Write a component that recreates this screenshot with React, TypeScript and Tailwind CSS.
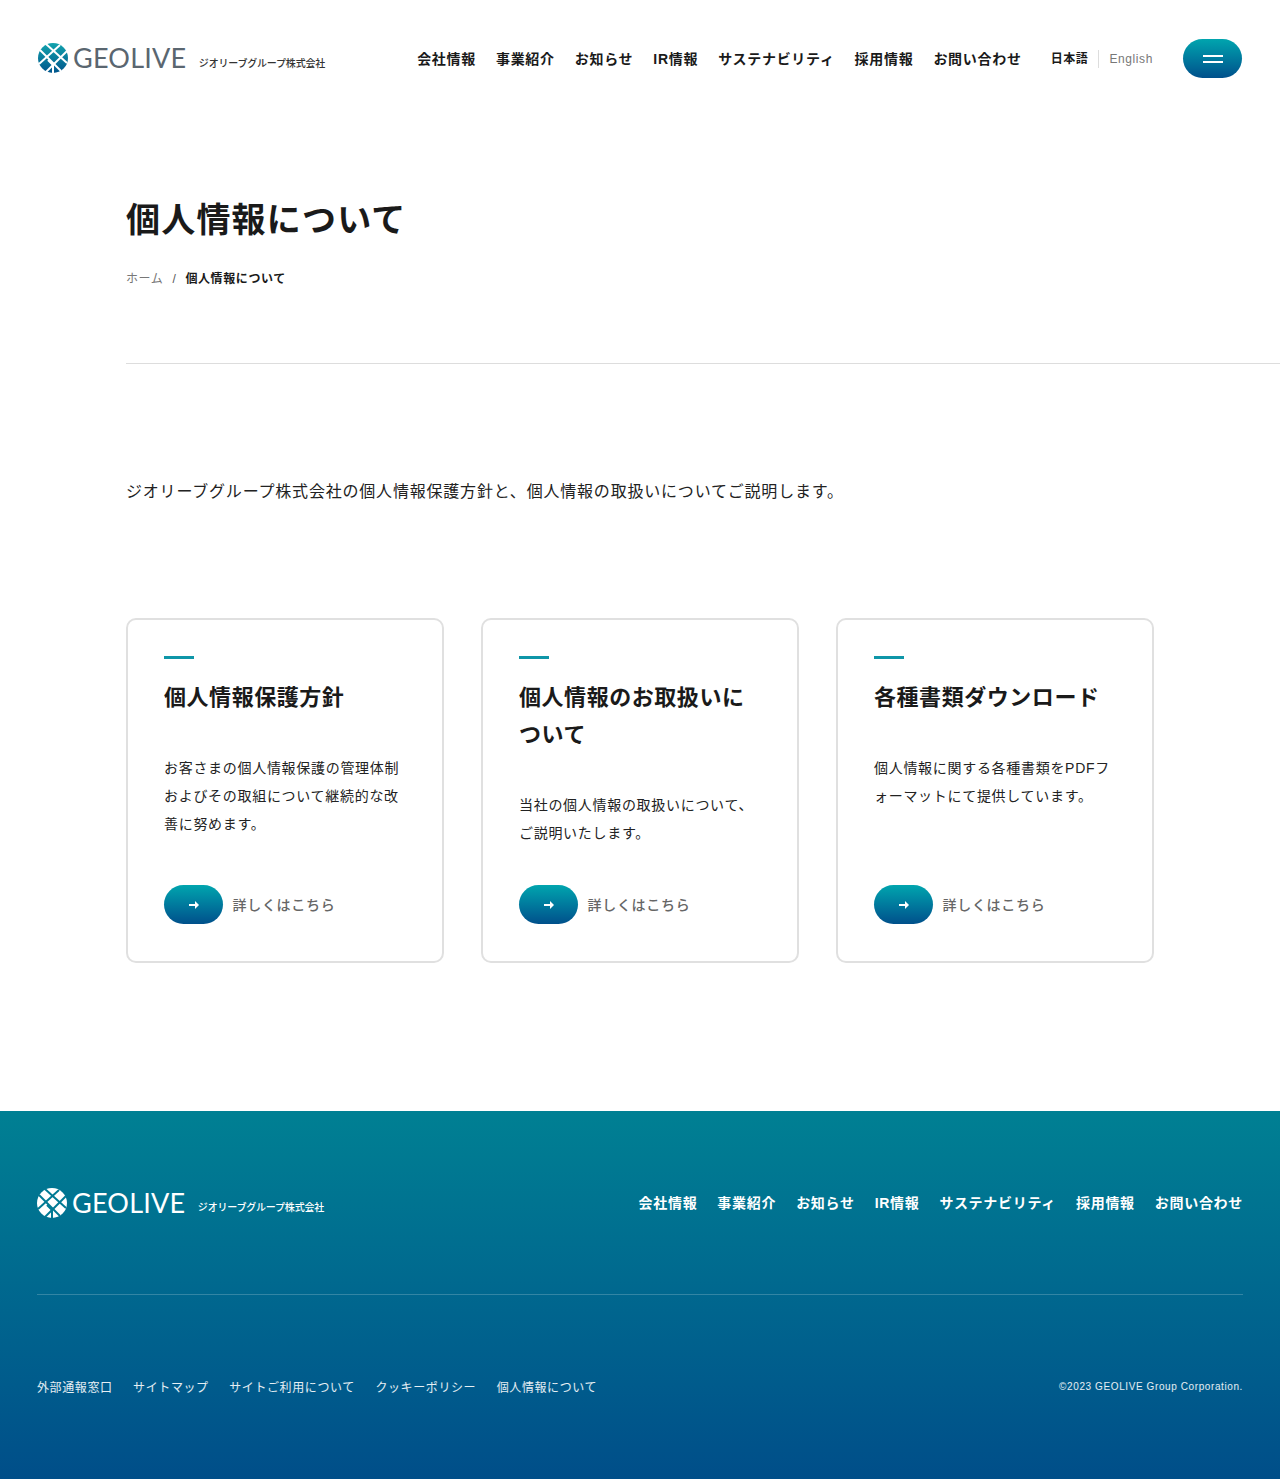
import { useId } from "react"

const nav = ["会社情報", "事業紹介", "お知らせ", "IR情報", "サステナビリティ", "採用情報", "お問い合わせ"]
const subLinks = ["外部通報窓口", "サイトマップ", "サイトご利用について", "クッキーポリシー", "個人情報について"]

const cards = [
  {
    title: "個人情報保護方針",
    body: "お客さまの個人情報保護の管理体制およびその取組について継続的な改善に努めます。",
  },
  {
    title: "個人情報のお取扱いについて",
    body: "当社の個人情報の取扱いについて、ご説明いたします。",
  },
  {
    title: "各種書類ダウンロード",
    body: "個人情報に関する各種書類をPDFフォーマットにて提供しています。",
  },
]

function LogoMark({ inverse }: { inverse?: boolean }) {
  const id = useId()
  const line = inverse ? "#007a94" : "#ffffff"
  return (
    <svg viewBox="0 0 30 30" className="h-[30px] w-[30px] shrink-0">
      <defs>
        <linearGradient id={id} x1="0" y1="0" x2="0" y2="1">
          <stop offset="0" stopColor="#12a3ad" />
          <stop offset="1" stopColor="#00558c" />
        </linearGradient>
      </defs>
      <circle cx="15" cy="15" r="15" fill={inverse ? "#ffffff" : `url(#${id})`} />
      <g stroke={line} strokeWidth="2" fill="none">
        <path d="M2 7 L23 28" />
        <path d="M8 1 L29 20" />
        <path d="M1 21 L22 2" />
        <path d="M8 29 L29 8" />
        <path d="M15 30 L15 22 L10 17" />
      </g>
    </svg>
  )
}

function Logo({ inverse }: { inverse?: boolean }) {
  return (
    <div className={`flex items-center ${inverse ? "text-white" : "-mt-[2px] text-[#5a6670]"}`}>
      <LogoMark inverse={inverse} />
      <span className={`ml-[5px] font-['Lato',sans-serif] text-[27px] leading-none tracking-[0.008em] ${inverse ? "mb-[2px]" : ""}`}>GEOLIVE</span>
      <span className={`ml-[12.5px] text-[10px] font-medium leading-none tracking-[-0.02em] ${inverse ? "mt-[9px] text-white" : "mt-[13px] text-[#333]"}`}>
        ジオリーブグループ株式会社
      </span>
    </div>
  )
}

function GradientPill({ children, className }: { children: React.ReactNode; className?: string }) {
  return (
    <span className={`flex h-[39px] w-[59px] items-center justify-center rounded-[20px] bg-gradient-to-b from-[#02a5ae] to-[#00508b] ${className ?? ""}`}>
      {children}
    </span>
  )
}

function InfoCard({ title, body }: { title: string; body: string }) {
  return (
    <div className="flex flex-col rounded-[10px] border-2 border-[#e0e0e0] px-9 pb-[37px] pt-[36px]">
      <div className="h-[3px] w-[30px] bg-[#0f96a8]" />
      <h3 className="mt-[20px] text-[22px] font-bold leading-[37px] tracking-[0.025em] text-[#1a1a1a]">{title}</h3>
      <p className="mb-[38px] mt-[38px] text-[14px] leading-[28px] tracking-[0.05em] text-[#222]">{body}</p>
      <a className="mt-auto flex items-center">
        <GradientPill>
          <svg viewBox="0 0 10 10" className="h-[10px] w-[10px] fill-white">
            <path d="M0 4.1 H6 V1 L10 5 L6 9 V5.9 H0 Z" />
          </svg>
        </GradientPill>
        <span className="ml-[9.5px] pt-[2px] text-[14px] font-medium tracking-[0.05em] text-[#666]">詳しくはこちら</span>
      </a>
    </div>
  )
}

export default function App() {
  return (
    <div className="min-h-[1479px] bg-white font-['Liberation_Sans','Noto_Sans_CJK_JP',sans-serif] text-[#1a1a1a]">
      <header className="flex h-[117px] items-center justify-between pl-[38px] pr-[38px]">
        <Logo />
        <div className="flex items-center">
          <nav className="flex gap-[20px] pt-[2px] text-[14px] font-bold tracking-[0.05em]">
            {nav.map((n) => (
              <a key={n}>{n}</a>
            ))}
          </nav>
          <div className="ml-[29px] flex items-center text-[12px] tracking-[0.05em]">
            <span className="border-r border-[#ddd] pr-[10px] font-bold">日本語</span>
            <span className="pl-[10px] text-[#777]">English</span>
          </div>
          <button className="ml-[30px]">
            <GradientPill className="flex-col gap-[4px]">
              <span className="h-[2px] w-[20px] bg-white" />
              <span className="h-[2px] w-[20px] bg-white" />
            </GradientPill>
          </button>
        </div>
      </header>

      <main className="pl-[126px]">
        <h1 className="mt-[79px] text-[34px] font-bold leading-[48px] tracking-[0.035em]">個人情報について</h1>
        <div className="mt-[26px] flex items-center text-[12px] tracking-[0.05em]">
          <span className="text-[#777]">ホーム</span>
          <span className="mx-[9px] text-[#555]">/</span>
          <span className="font-bold">個人情報について</span>
        </div>
        <div className="mt-[75px] h-px bg-[#dddddd]" />
        <p className="mt-[114px] text-[16px] leading-[28px] tracking-[0.05em] text-[#222]">
          ジオリーブグループ株式会社の個人情報保護方針と、個人情報の取扱いについてご説明します。
        </p>
        <div className="mt-[112px] grid w-[1028px] grid-cols-3 gap-[37px]">
          {cards.map((c) => (
            <InfoCard key={c.title} title={c.title} body={c.body} />
          ))}
        </div>
      </main>

      <footer className="mt-[148px] h-[368px] bg-gradient-to-b from-[#008093] to-[#004e89] px-[37px] text-white">
        <div className="flex items-center justify-between pt-[77px]">
          <Logo inverse />
          <nav className="flex gap-[20px] text-[14px] font-bold tracking-[0.05em]">
            {nav.map((n) => (
              <a key={n}>{n}</a>
            ))}
          </nav>
        </div>
        <div className="mt-[76px] h-px bg-white/20" />
        <div className="mt-[84px] flex items-start justify-between">
          <div className="flex gap-[20.5px] text-[12px] tracking-[0.05em] text-white/90">
            {subLinks.map((s) => (
              <a key={s}>{s}</a>
            ))}
          </div>
          <span className="text-[10px] tracking-[0.06em] text-white/90">©2023 GEOLIVE Group Corporation.</span>
        </div>
      </footer>
    </div>
  )
}
